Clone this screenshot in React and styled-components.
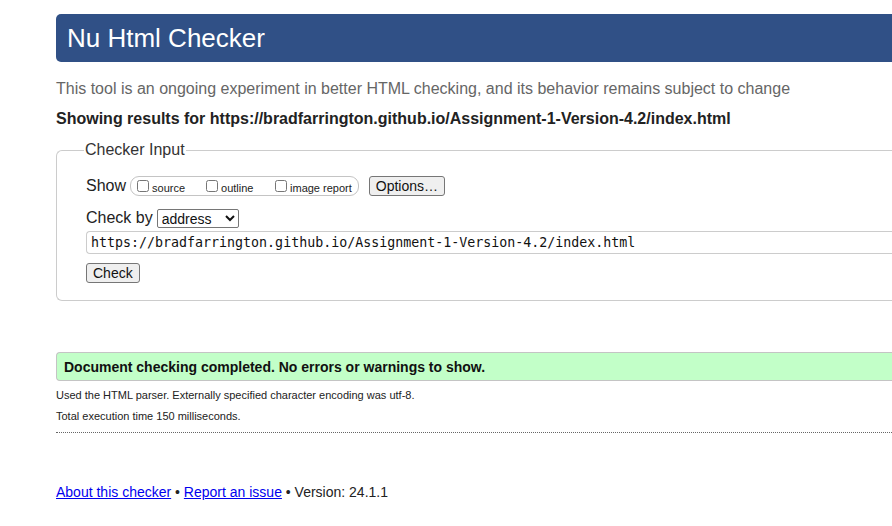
import React from 'react';
import styled, { createGlobalStyle } from 'styled-components';

const GlobalStyle = createGlobalStyle`
  html, body {
    margin: 0;
    padding: 0;
    overflow: hidden;
    background: #fff;
  }
  body {
    font-family: "Liberation Sans", Arial, sans-serif;
    color: #222;
  }
`;

const Page = styled.div`
  width: 1000px;
  padding: 14px 0 0 56px;
`;

const Header = styled.h1`
  margin: 0;
  height: 48px;
  display: flex;
  align-items: center;
  padding-left: 11px;
  background: #305086;
  color: #fff;
  font-size: 26px;
  font-weight: normal;
  border-radius: 5px 0 0 5px;
`;

const Intro = styled.p`
  margin: 17px 0 0;
  font-size: 16px;
  line-height: 20px;
  color: #666;
`;

const Results = styled.p`
  margin: 10px 0 0;
  font-size: 16px;
  line-height: 20px;
  font-weight: bold;
  color: #222;
`;

const InputSet = styled.fieldset`
  margin: 12px 0 0;
  padding: 17px 0 17px 29px;
  border: 1px solid #ccc;
  border-right: none;
  border-radius: 6px 0 0 6px;
`;

const Legend = styled.legend`
  font-size: 16px;
  color: #333;
  padding: 0 1px;
  margin-left: -2px;
`;

const Row = styled.div`
  display: flex;
  align-items: center;
  height: 20px;
  font-size: 16px;
  color: #222;
  margin-top: ${(p) => p.$top || 0}px;
`;

const Options = styled.div`
  display: flex;
  align-items: center;
  box-sizing: border-box;
  height: 20px;
  margin-left: 4px;
  padding: 0 6px;
  border: 1px solid #c4c4c4;
  border-radius: 9px;
`;

const CheckLabel = styled.label`
  display: flex;
  align-items: baseline;
  font-size: 11px;
  color: #222;
  width: ${(p) => (p.$w ? `${p.$w}px` : 'auto')};
  margin-top: 2px;
`;

const Box = styled.input.attrs({ type: 'checkbox' })`
  margin: 0 3px 0 0;
  width: 12px;
  height: 12px;
`;

const Button = styled.button`
  font-family: "Liberation Sans", Arial, sans-serif;
  font-size: 14px;
  color: #111;
  height: 20px;
  padding: 0 ${(p) => p.$pad || 6}px;
  margin-left: ${(p) => p.$left || 0}px;
  background: #efefef;
  border: 1px solid #767676;
  border-radius: 3px;
`;

const Select = styled.select`
  margin-left: 4px;
  width: 82px;
  height: 19px;
  font-family: "Liberation Sans", Arial, sans-serif;
  font-size: 14px;
  color: #111;
  border: 1px solid #767676;
  border-radius: 2px;
  background: #fff;
`;

const UrlField = styled.input`
  display: block;
  box-sizing: border-box;
  margin-top: 3px;
  width: 900px;
  height: 23px;
  padding: 0 4px;
  font-family: "DejaVu Sans Mono", monospace;
  font-size: 13.3px;
  color: #111;
  border: 1px solid #ccc;
  border-right: none;
  border-radius: 4px 0 0 4px;
  outline: none;
`;

const Success = styled.div`
  margin-top: 51px;
  height: 27px;
  display: flex;
  align-items: center;
  padding-left: 7px;
  background: #c2ffc8;
  border: 1px solid #c4c4c4;
  border-right: none;
  border-radius: 4px 0 0 4px;
  font-size: 14px;
  font-weight: bold;
  color: #111;
`;

const Detail = styled.p`
  margin: ${(p) => p.$top}px 0 0;
  font-size: 11px;
  line-height: 14px;
  color: #222;
`;

const Divider = styled.hr`
  margin: 9px 0 0;
  border: none;
  border-top: 1px dotted #666;
`;

const Footer = styled.p`
  margin: 50px 0 0;
  font-size: 14px;
  line-height: 18px;
  color: #222;
`;

const Link = styled.a`
  color: #0000ee;
  text-decoration: underline;
`;

export default function App() {
  const url = 'https://bradfarrington.github.io/Assignment-1-Version-4.2/index.html';
  return (
    <>
      <GlobalStyle />
      <Page>
        <Header>Nu Html Checker</Header>
        <Intro>
          This tool is an ongoing experiment in better HTML checking, and its behavior remains subject to change
        </Intro>
        <Results>Showing results for {url}</Results>
        <InputSet>
          <Legend>Checker Input</Legend>
          <Row>
            Show
            <Options>
              <CheckLabel $w={69}><Box />source</CheckLabel>
              <CheckLabel $w={69}><Box />outline</CheckLabel>
              <CheckLabel><Box />image report</CheckLabel>
            </Options>
            <Button $left={10}>Options…</Button>
          </Row>
          <Row $top={12}>
            Check by
            <Select defaultValue="address">
              <option value="address">address</option>
              <option value="file">file upload</option>
              <option value="text">text input</option>
            </Select>
          </Row>
          <UrlField defaultValue={url} />
          <Row $top={9}>
            <Button>Check</Button>
          </Row>
        </InputSet>
        <Success>Document checking completed. No errors or warnings to show.</Success>
        <Detail $top={7}>Used the HTML parser. Externally specified character encoding was utf-8.</Detail>
        <Detail $top={7}>Total execution time 150 milliseconds.</Detail>
        <Divider />
        <Footer>
          <Link href="#about">About this checker</Link> • <Link href="#issue">Report an issue</Link> • Version: 24.1.1
        </Footer>
      </Page>
    </>
  );
}
